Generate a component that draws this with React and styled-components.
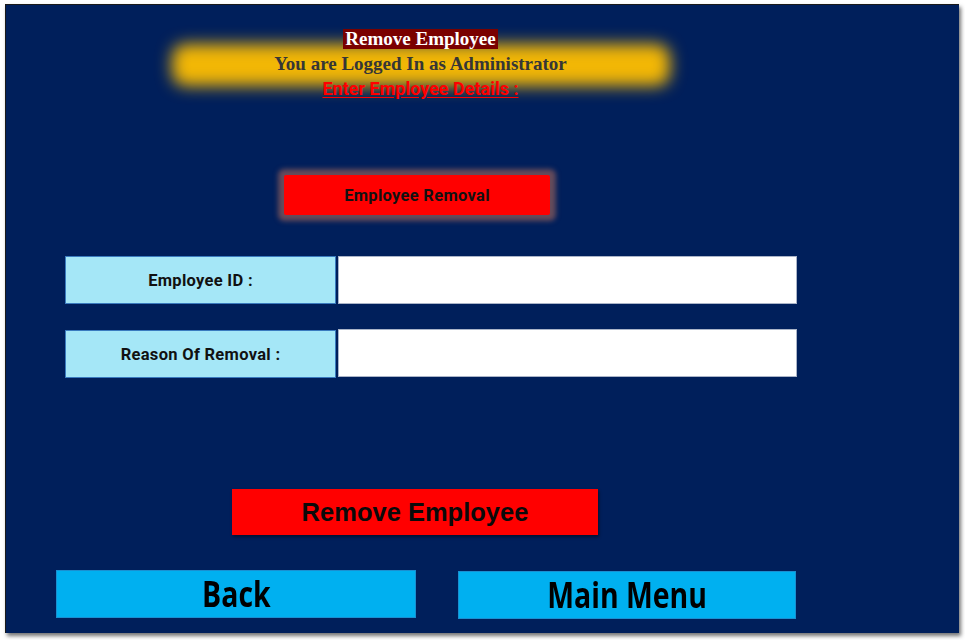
import React from "react";
import styled, { createGlobalStyle } from "styled-components";

const Global = createGlobalStyle`
  html, body { margin: 0; padding: 0; background: #ffffff; }
  #root { width: 965px; height: 640px; }
  * { box-sizing: border-box; }
`;

const Panel = styled.div`
  margin: 4px 0 0 5px;
  width: 954px;
  height: 629px;
  background: #001f5b;
  border-top: 1px solid #1a1a1a;
  border-left: 1px solid #1a1a1a;
  box-shadow: 2px 3px 4px rgba(0, 0, 0, 0.55);
  display: flex;
  flex-direction: column;
  padding: 24px 0 0 50px;
`;

const Content = styled.div`
  width: 741px;
  display: flex;
  flex-direction: column;
`;

const Header = styled.header`
  position: relative;
  align-self: center;
  margin-left: -12px;
  width: 510px;
  display: flex;
  flex-direction: column;
  align-items: center;
  &::before {
    content: "";
    position: absolute;
    left: 6px;
    right: 6px;
    top: 15px;
    height: 42px;
    background: #f2b705;
    border-radius: 14px;
    filter: blur(8px);
  }
`;

const Title = styled.h1`
  position: relative;
  margin: 0;
  padding: 0 2px;
  height: 20px;
  line-height: 20px;
  font-family: "Liberation Serif", "Times New Roman", serif;
  font-weight: 700;
  font-size: 19px;
  color: #ffffff;
  background: #7a0000;
`;

const Subtitle = styled.p`
  position: relative;
  margin: 4px 0 0;
  line-height: 22px;
  font-family: "Liberation Serif", "Times New Roman", serif;
  font-weight: 700;
  font-size: 19px;
  color: #363636;
`;

const Hint = styled.p`
  position: relative;
  margin: 3px 0 0;
  line-height: 21px;
  font-family: Roboto, "Liberation Sans", sans-serif;
  font-style: normal;
  font-weight: 700;
  font-size: 18px;
  color: #ff0000;
  text-decoration: underline;
  text-underline-offset: 2px;
`;

const Section = styled.div`
  align-self: flex-start;
  margin: 76px 0 0 228px;
  width: 266px;
  height: 40px;
  background: #ff0000;
  box-shadow: 0 0 5px 6px rgba(170, 105, 90, 0.6);
  border-radius: 2px;
  display: flex;
  align-items: center;
  justify-content: center;
  font-family: Roboto, "DejaVu Sans", sans-serif;
  font-weight: 700;
  font-size: 16.5px;
  letter-spacing: 0.3px;
  color: #111;
`;

const Form = styled.div`
  margin: 41px 0 0 9px;
  display: flex;
  flex-direction: column;
  gap: 26px;
`;

const Row = styled.div`
  display: flex;
  gap: 2px;
  height: 48px;
`;

const Label = styled.label`
  width: 271px;
  background: #a5e7f7;
  border: 1px solid #3a7bbf;
  display: flex;
  align-items: center;
  justify-content: center;
  font-family: Roboto, "DejaVu Sans", sans-serif;
  font-weight: 700;
  font-size: 16.5px;
  letter-spacing: 0.3px;
  color: #111;
`;

const Input = styled.input`
  width: 459px;
  height: 48px;
  margin-top: ${(p) => p.$shift || 0}px;
  border: 1px solid #aab4c8;
  background: #ffffff;
  outline: none;
  padding: 0 8px;
`;

const RemoveButton = styled.button`
  align-self: flex-start;
  margin: 111px 0 0 176px;
  width: 366px;
  height: 46px;
  border: none;
  background: #ff0000;
  box-shadow: 1px 2px 3px rgba(0, 0, 0, 0.45);
  font-family: "Liberation Sans", Arial, sans-serif;
  font-weight: 700;
  font-size: 25.5px;
  color: #0a0a0a;
  cursor: pointer;
  padding: 0;
`;

const NavBar = styled.div`
  margin-top: 35px;
  display: flex;
  gap: 42px;
`;

const NavButton = styled.button`
  width: ${(p) => p.$w}px;
  height: 48px;
  margin-top: ${(p) => p.$shift || 0}px;
  border: 1px solid #1a8fd0;
  background: #00b0f0;
  padding: 0;
  cursor: pointer;
  display: flex;
  align-items: center;
  justify-content: center;
`;

const NavText = styled.span`
  display: inline-block;
  font-family: "Open Sans", "Liberation Sans", sans-serif;
  font-weight: 700;
  font-size: 36px;
  line-height: 40px;
  color: #000;
  transform: scaleX(0.79);
`;

export default function App() {
  return (
    <>
      <Global />
      <Panel>
        <Content>
          <Header>
            <Title>Remove Employee</Title>
            <Subtitle>You are Logged In as Administrator</Subtitle>
            <Hint>Enter Employee Details :</Hint>
          </Header>
          <Section>Employee Removal</Section>
          <Form>
            <Row>
              <Label>Employee ID :</Label>
              <Input />
            </Row>
            <Row>
              <Label>Reason Of Removal :</Label>
              <Input $shift={-1} />
            </Row>
          </Form>
          <RemoveButton>Remove Employee</RemoveButton>
          <NavBar>
            <NavButton $w={360}>
              <NavText>Back</NavText>
            </NavButton>
            <NavButton $w={338} $shift={1}>
              <NavText>Main Menu</NavText>
            </NavButton>
          </NavBar>
        </Content>
      </Panel>
    </>
  );
}
